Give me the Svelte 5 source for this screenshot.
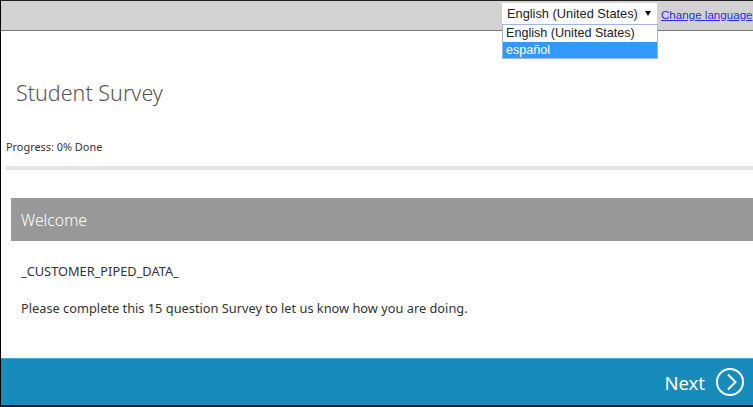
<script>
  let languages = ['English (United States)', 'español'];
  let selected = 1;
</script>

<div class="frame">
  <header class="topbar">
    <div class="lang-wrap">
      <div class="select">
        <span>{languages[0]}</span>
        <svg class="arrow" width="6" height="5" viewBox="0 0 6 5"><path d="M0 0H6L3 5Z" fill="#111" /></svg>
      </div>
      <a href="#top" class="change">Change language</a>
      <ul class="options">
        {#each languages as lang, i}
          <li class:selected={i === selected}>{lang}</li>
        {/each}
      </ul>
    </div>
  </header>

  <main class="content">
    <h1>Student Survey</h1>
    <p class="progress">Progress: 0% Done</p>
    <div class="rule"></div>

    <h2>Welcome</h2>
    <div class="body">
      <p>_CUSTOMER_PIPED_DATA_</p>
      <p>Please complete this 15 question Survey to let us know how you are doing.</p>
    </div>
  </main>

  <footer class="footer">
    <span>Next</span>
    <svg class="next-icon" width="28" height="28" viewBox="0 0 28 28" fill="none" stroke="#fff">
      <circle cx="14" cy="14" r="13" stroke-width="2" />
      <path d="M12 6.5L19.5 14L12 21.5" stroke-width="2" />
    </svg>
  </footer>
</div>

<style>
  :global(body) {
    margin: 0;
    background: #fff;
  }

  .frame {
    width: 753px;
    height: 407px;
    box-sizing: border-box;
    border-left: 1px solid #000;
    border-top: 1px solid #222;
    border-bottom: 2px solid #111;
    display: flex;
    flex-direction: column;
    overflow: hidden;
    font-family: "Noto Sans", "Open Sans", sans-serif;
    color: #444;
  }

  .topbar {
    height: 29px;
    flex: none;
    background: #d2d2d2;
    border-bottom: 1px solid #777;
    display: flex;
    justify-content: flex-end;
  }

  .lang-wrap {
    position: relative;
    width: 251px;
    display: flex;
    align-items: flex-start;
    gap: 4px;
    font-family: "Liberation Sans", Arial, sans-serif;
  }

  .select {
    width: 155px;
    flex: none;
    height: 21px;
    margin-top: 2px;
    background: #fff;
    box-sizing: border-box;
    padding: 0 6px 0 5px;
    display: flex;
    align-items: center;
    justify-content: space-between;
    font-size: 12.8px;
    color: #222;
  }

  .change {
    margin-top: 7px;
    font-size: 11.6px;
    color: #2a2aee;
    white-space: nowrap;
  }

  .options {
    position: absolute;
    top: 23px;
    left: 0;
    width: 156px;
    margin: 0;
    padding: 0;
    list-style: none;
    box-sizing: border-box;
    background: #fff;
    border: 1px solid #9db8e0;
    font-size: 12.6px;
    color: #222;
  }

  .options li {
    height: 16.5px;
    line-height: 16px;
    padding-left: 3px;
  }

  .options li.selected {
    background: #3399ff;
    color: #fff;
  }

  .content {
    flex: 1;
    min-height: 0;
    background: #fff;
  }

  h1 {
    margin: 47px 0 0 15px;
    font-size: 21.5px;
    line-height: 30px;
    font-weight: 300;
    color: #555;
  }

  .progress {
    margin: 31px 0 0 5px;
    font-size: 10.9px;
    line-height: 16px;
    color: #333;
  }

  .rule {
    height: 4px;
    margin: 11px 0 0 5px;
    background: #e6e6e6;
  }

  h2 {
    margin: 28px 0 0 10px;
    height: 43px;
    padding-left: 10px;
    background: #989898;
    color: #fff;
    font-size: 15.8px;
    line-height: 45px;
    font-weight: 300;
  }

  .body {
    padding: 22px 0 0 20px;
    font-size: 12.8px;
    color: #333;
  }

  .body p {
    margin: 0 0 20px;
    line-height: 17px;
  }

  .footer {
    height: 47px;
    flex: none;
    background: #178bbb;
    border-top: 1px solid #4ba6cc;
    box-sizing: border-box;
    display: flex;
    align-items: center;
    justify-content: flex-end;
    gap: 11px;
    padding-right: 9px;
    color: #fff;
    font-size: 18.5px;
  }
</style>
